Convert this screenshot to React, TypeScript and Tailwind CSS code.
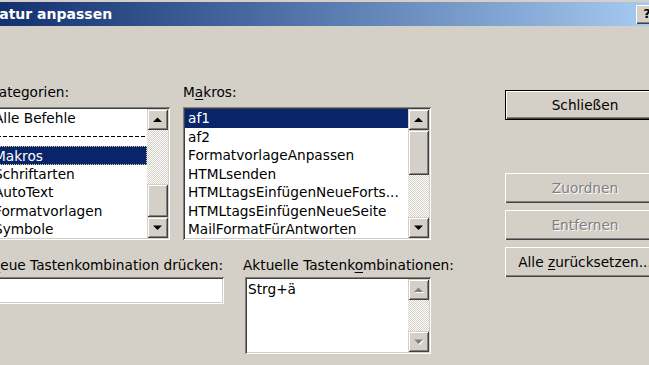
import clsx from 'clsx'

const sunken =
  'p-[2px] shadow-[inset_1px_1px_#808080,inset_-1px_-1px_#ffffff,inset_2px_2px_#404040,inset_-2px_-2px_#d4d0c8]'
const raisedScroll =
  'bg-[#d4d0c8] shadow-[inset_1px_1px_#d4d0c8,inset_-1px_-1px_#404040,inset_2px_2px_#ffffff,inset_-2px_-2px_#808080]'
const raisedButton =
  'bg-[#d4d0c8] shadow-[inset_1px_1px_#ffffff,inset_-1px_-1px_#404040,inset_-2px_-2px_#808080]'
const checker =
  'bg-[image:repeating-conic-gradient(#ffffff_0%_25%,#d4d0c8_0%_50%)] bg-[length:2px_2px]'

function Arrow({ dir, disabled }: { dir: 'up' | 'down'; disabled?: boolean }) {
  const pts = dir === 'up' ? '0,5 4.5,0.5 9,5' : '0,0.5 9,0.5 4.5,5'
  return (
    <svg width="10" height="6" viewBox="0 0 10 6">
      {disabled && <polygon points={pts} fill="#ffffff" transform="translate(1,1)" />}
      <polygon points={pts} fill={disabled ? '#808080' : '#000000'} />
    </svg>
  )
}

function ScrollButton({ dir, disabled }: { dir: 'up' | 'down'; disabled?: boolean }) {
  return (
    <div className={clsx('flex h-[21px] w-full items-center justify-center', raisedScroll)}>
      <Arrow dir={dir} disabled={disabled} />
    </div>
  )
}

function ScrollBar({ thumb, disabled }: { thumb?: 'top' | 'bottom'; disabled?: boolean }) {
  return (
    <div className="flex w-[21px] shrink-0 flex-col">
      <ScrollButton dir="up" disabled={disabled} />
      <div className={clsx('flex flex-1 flex-col', checker, thumb === 'bottom' ? 'justify-end' : 'justify-start')}>
        {thumb === 'top' && <div className={clsx('h-[45px]', raisedScroll)} />}
        {thumb === 'bottom' && <div className={clsx('h-[33px]', raisedScroll)} />}
      </div>
      <ScrollButton dir="down" disabled={disabled} />
    </div>
  )
}

function Row({ children, selected, focus }: { children?: React.ReactNode; selected?: boolean; focus?: boolean }) {
  return (
    <div
      className={clsx(
        'h-[18.5px] overflow-hidden whitespace-nowrap leading-[18.5px]',
        selected ? 'bg-[#0a246a] text-white' : '',
        focus ? 'border border-dotted border-[#e0d490] pl-[2px] leading-[16.5px]' : 'pl-[3px]'
      )}
    >
      {children}
    </div>
  )
}

function Button({ children, isDefault, disabled }: { children: React.ReactNode; isDefault?: boolean; disabled?: boolean }) {
  return (
    <div
      className={clsx(
        'flex h-[30px] w-[160px] items-center justify-center whitespace-nowrap',
        isDefault
          ? 'border border-black bg-[#d4d0c8] shadow-[inset_1px_1px_#ffffff,inset_-1px_-1px_#404040,inset_-2px_-2px_#808080]'
          : raisedButton,
        disabled && 'text-[#808080] [text-shadow:1px_1px_0_#ffffff]'
      )}
    >
      <span>{children}</span>
    </div>
  )
}

export default function App() {
  return (
    <div className="h-[365px] w-[649px] overflow-hidden bg-[#d4d0c8] font-['DejaVu_Sans',sans-serif] text-[13.7px] text-black">
      {/* title bar */}
      <div className="pt-[2px]">
        <div className="flex h-[24px] items-center bg-gradient-to-r from-[#14306f] to-[#a6caf0]">
          <span className="ml-[-33px] whitespace-nowrap text-[14px] font-bold text-white">Tastatur anpassen</span>
          <div className={clsx('mr-[-9px] ml-auto flex h-[19px] w-[22px] shrink-0 items-center justify-center text-[13px] font-bold', raisedButton)}>
            ?
          </div>
        </div>
      </div>

      <div className="flex pt-[57px]">
        <div className="ml-[-11px] flex shrink-0 flex-col">
          <div className="flex gap-[13px]">
            <div className="w-[181px]">
              <div className="mb-[6px] ml-[1px] h-[18px] leading-[18px]">
                <span className="underline underline-offset-2">K</span>ategorien:
              </div>
              <div className={clsx('flex h-[133px] bg-white', sunken)}>
                <div className="flex-1 overflow-hidden">
                  <Row>Alle Befehle</Row>
                  <div className="flex h-[18.5px] items-center">
                    <div className="h-px w-full bg-[image:repeating-linear-gradient(90deg,#000000_0_4px,transparent_4px_6px)]" />
                  </div>
                  <Row selected focus>Makros</Row>
                  <Row>Schriftarten</Row>
                  <Row>AutoText</Row>
                  <Row>Formatvorlagen</Row>
                  <Row>Symbole</Row>
                </div>
                <ScrollBar thumb="bottom" />
              </div>
            </div>

            <div className="w-[248px]">
              <div className="mb-[6px] h-[18px] leading-[18px]">
                M<span className="underline underline-offset-2">a</span>kros:
              </div>
              <div className={clsx('flex h-[133px] bg-white', sunken)}>
                <div className="flex-1 overflow-hidden">
                  <Row selected>af1</Row>
                  <Row>af2</Row>
                  <Row>FormatvorlageAnpassen</Row>
                  <Row>HTMLsenden</Row>
                  <Row>HTMLtagsEinfügenNeueForts...</Row>
                  <Row>HTMLtagsEinfügenNeueSeite</Row>
                  <Row>MailFormatFürAntworten</Row>
                </div>
                <ScrollBar thumb="top" />
              </div>
            </div>
          </div>

          <div className="mt-[16px] flex gap-[19px]">
            <div className="w-[235px]">
              <div className="mb-[3px] ml-[1px] h-[18px] whitespace-nowrap leading-[18px]">
                <span className="underline underline-offset-2">N</span>eue Tastenkombination drücken:
              </div>
              <div className={clsx('h-[27px] bg-white', sunken)} />
            </div>

            <div className="w-[188px]">
              <div className="mb-[3px] h-[18px] whitespace-nowrap leading-[18px]">
                Aktuelle Tastenk<span className="underline underline-offset-2">o</span>mbinationen:
              </div>
              <div className={clsx('ml-[2px] flex h-[77px] bg-white', sunken)}>
                <div className="flex-1 overflow-hidden pl-[1px] pt-[1px] leading-[18.5px]">Strg+ä</div>
                <ScrollBar disabled />
              </div>
            </div>
          </div>
        </div>

        <div className="ml-[74px] flex shrink-0 flex-col pt-[7px]">
          <Button isDefault>Schließen</Button>
          <div className="mt-[53px]">
            <Button disabled>Zuordnen</Button>
          </div>
          <div className="mt-[7px]">
            <Button disabled>Entfernen</Button>
          </div>
          <div className="mt-[7px]">
            <Button>
              Alle <span className="underline underline-offset-2">z</span>urücksetzen...
            </Button>
          </div>
        </div>
      </div>
    </div>
  )
}
